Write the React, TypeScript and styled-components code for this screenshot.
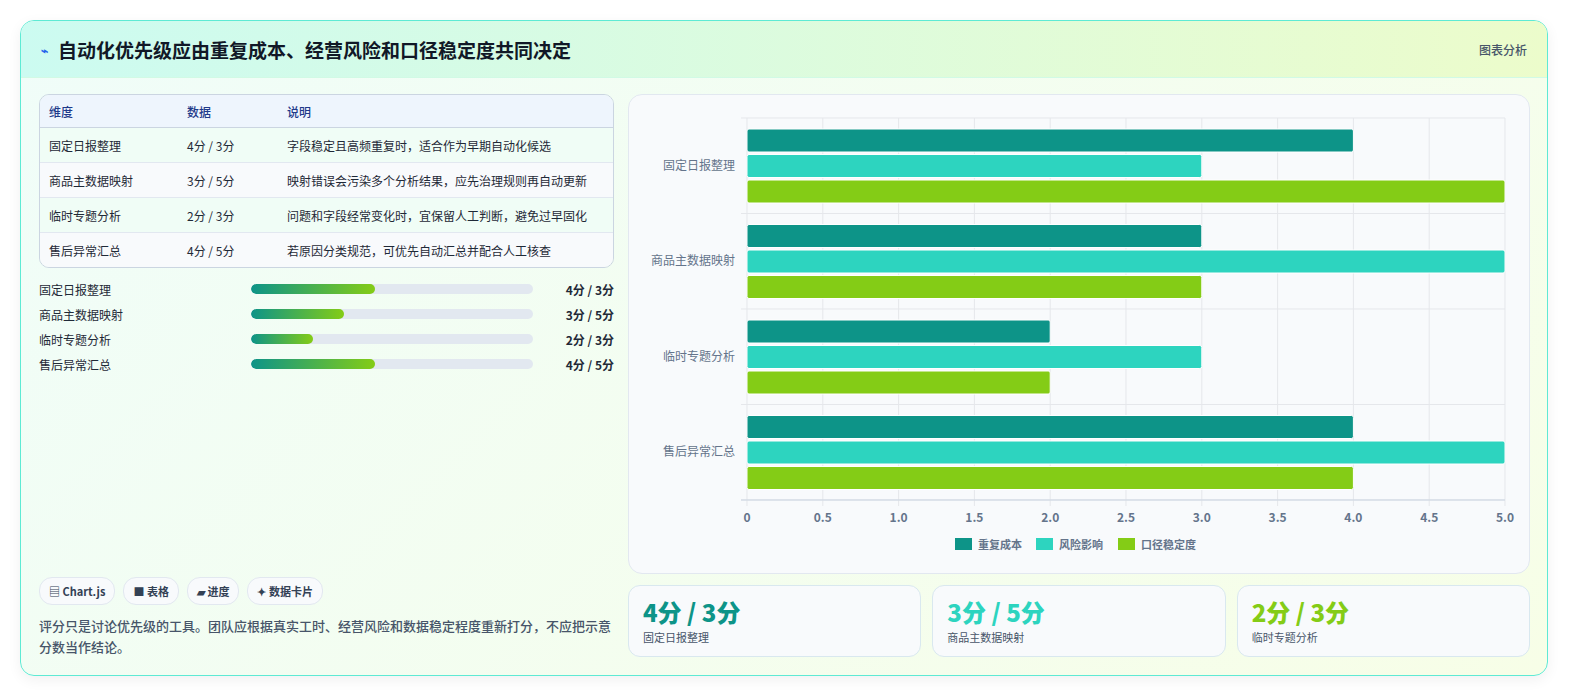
import styled, { createGlobalStyle } from "styled-components";

const Global = createGlobalStyle`
  html, body { margin: 0; background: #fff; }
  body { font-family: "Noto Sans CJK SC", "Noto Sans", sans-serif; color: #1f2937; }
`;

const Page = styled.div`
  padding: 20px 22px 22px 20px;
`;
const Card = styled.div`
  border: 1px solid #5eead4;
  border-radius: 14px;
  overflow: hidden;
  background: linear-gradient(135deg, #f0fdf9 0%, #f7fee7 100%);
  box-shadow: 0 4px 14px rgba(0,0,0,0.06);
`;
const Header = styled.div`
  height: 56px;
  display: flex;
  align-items: center;
  justify-content: space-between;
  padding: 0 20px 0 20px;
  background: linear-gradient(90deg, #ccfbf1 0%, #ecfccb 100%);
  border-bottom: 1px solid #d1fae5;
`;
const Title = styled.h1`
  margin: 0;
  font-size: 19px;
  font-weight: 700;
  color: #111827;
  display: flex;
  align-items: center;
  gap: 10px;
`;
const Bolt = styled.span`
  color: #2563eb;
  font-size: 12px;
`;
const HeaderTag = styled.span`
  font-size: 12px;
  color: #475569;
  font-weight: 500;
`;
const Body = styled.div`
  display: grid;
  grid-template-columns: 575px 1fr;
  gap: 14px;
  padding: 16px 18px 18px 18px;
`;
const Left = styled.div`
  display: flex;
  flex-direction: column;
`;
const Table = styled.table`
  width: 100%;
  border-collapse: separate;
  border-spacing: 0;
  border: 1px solid #cbd5e1;
  border-radius: 10px;
  overflow: hidden;
  font-size: 12px;
`;
const Th = styled.th`
  text-align: left;
  font-weight: 500;
  color: #1e3a8a;
  background: #eef5fd;
  height: 32px;
  padding: 0 9px;
  border-bottom: 1px solid #cbd5e1;
`;
const Td = styled.td<{ $alt?: boolean; $last?: boolean }>`
  height: 34px;
  padding: 0 9px;
  color: #1f2937;
  background: ${(p) => (p.$alt ? "#f8fafc" : "#f0fdf6")};
  border-bottom: ${(p) => (p.$last ? "none" : "1px solid #e2e8f0")};
`;
const Bars = styled.div`
  margin-top: 12px;
  display: flex;
  flex-direction: column;
  gap: 7px;
`;
const BarRow = styled.div`
  display: grid;
  grid-template-columns: 212px 291px 1fr;
  align-items: center;
  gap: 0;
  font-size: 12px;
  height: 18px;
`;
const Track = styled.div`
  height: 10px;
  border-radius: 5px;
  background: #e2e8f0;
  overflow: hidden;
  margin-right: 9px;
`;
const Fill = styled.div`
  height: 100%;
  border-radius: 5px;
  background: linear-gradient(90deg, #0d9488, #84cc16);
`;
const BarVal = styled.span`
  text-align: right;
  font-weight: 700;
  color: #1f2937;
`;
const Spacer = styled.div`
  flex: 1;
`;
const Chips = styled.div`
  display: flex;
  gap: 8px;
`;
const Chip = styled.span`
  height: 26px;
  padding: 0 9px;
  border: 1px solid #e2e8f0;
  border-radius: 13px;
  background: #f8fafc;
  font-size: 11px;
  font-weight: 600;
  color: #334155;
  display: flex;
  align-items: center;
  gap: 3px;
`;
const Note = styled.p`
  margin: 10px 0 0;
  font-size: 13px;
  line-height: 21px;
  color: #475569;
  font-weight: 500;
`;
const Right = styled.div`
  display: flex;
  flex-direction: column;
  gap: 11px;
`;
const ChartPanel = styled.div`
  height: 478px;
  border: 1px solid #e2e8f0;
  border-radius: 14px;
  background: #f8fafc;
  overflow: hidden;
`;
const Stats = styled.div`
  display: grid;
  grid-template-columns: repeat(3, 1fr);
  gap: 11px;
`;
const Stat = styled.div`
  height: 72px;
  border: 1px solid #d9e8ef;
  border-radius: 12px;
  background: #f8fafc;
  padding: 12px 14px 0;
  box-sizing: border-box;
`;
const StatVal = styled.div<{ $c: string }>`
  font-size: 24px;
  font-weight: 800;
  color: ${(p) => p.$c};
  line-height: 28px;
`;
const StatLabel = styled.div`
  font-size: 11px;
  color: #475569;
  margin-top: 3px;
`;

const rows = [
  { n: "固定日报整理", v: "4分 / 3分", d: "字段稳定且高频重复时，适合作为早期自动化候选", a: 4, b: 3, c: 5 },
  { n: "商品主数据映射", v: "3分 / 5分", d: "映射错误会污染多个分析结果，应先治理规则再自动更新", a: 3, b: 5, c: 3 },
  { n: "临时专题分析", v: "2分 / 3分", d: "问题和字段经常变化时，宜保留人工判断，避免过早固化", a: 2, b: 3, c: 2 },
  { n: "售后异常汇总", v: "4分 / 5分", d: "若原因分类规范，可优先自动汇总并配合人工核查", a: 4, b: 5, c: 4 },
];
const colors = ["#0d9488", "#2dd4bf", "#84cc16"];

function Chart() {
  const x0 = 118, x1 = 876, top = 23, bot = 405;
  const sx = (v: number) => x0 + ((x1 - x0) * v) / 5;
  const band = (bot - top) / 4;
  const ticks = [0, 0.5, 1, 1.5, 2, 2.5, 3, 3.5, 4, 4.5, 5];
  return (
    <svg width="900" height="478" style={{ display: "block" }}>
      {ticks.map((t) => (
        <line key={t} x1={sx(t)} x2={sx(t)} y1={top} y2={bot + 6} stroke="#e5e7eb" />
      ))}
      {[0, 1, 2, 3, 4].map((i) => (
        <line key={i} x1={x0 - 6} x2={x1} y1={top + band * i} y2={top + band * i} stroke="#e5e7eb" />
      ))}
      <line x1={x0 - 6} x2={x1} y1={bot} y2={bot} stroke="#cbd5e1" />
      {rows.map((r, i) => {
        const y = top + band * i + 11;
        return (
          <g key={r.n}>
            <text x={x0 - 12} y={top + band * i + band / 2 + 4} textAnchor="end" fontSize="12" fill="#64748b">{r.n}</text>
            {[r.a, r.b, r.c].map((v, k) => (
              <rect key={k} x={x0} y={y + k * 25.5} width={sx(v) - x0} height={23} rx={2} fill={colors[k]} stroke="#fff" strokeWidth={1} />
            ))}
          </g>
        );
      })}
      {ticks.map((t) => (
        <text key={t} x={sx(t)} y={bot + 22} textAnchor="middle" fontSize="12" fontWeight="600" fill="#64748b">
          {t === 0 ? "0" : t.toFixed(1)}
        </text>
      ))}
      {["重复成本", "风险影响", "口径稳定度"].map((l, k) => {
        const lx = [326, 407, 489][k];
        return (
          <g key={l}>
            <rect x={lx} y={443} width={17} height={12} fill={colors[k]} />
            <text x={lx + 23} y={454} fontSize="11" fontWeight="600" fill="#64748b">{l}</text>
          </g>
        );
      })}
    </svg>
  );
}

export default function App() {
  return (
    <Page>
      <Global />
      <Card>
        <Header>
          <Title><Bolt>⌁</Bolt>自动化优先级应由重复成本、经营风险和口径稳定度共同决定</Title>
          <HeaderTag>图表分析</HeaderTag>
        </Header>
        <Body>
          <Left>
            <Table>
              <thead>
                <tr><Th style={{ width: 120 }}>维度</Th><Th style={{ width: 82 }}>数据</Th><Th>说明</Th></tr>
              </thead>
              <tbody>
                {rows.map((r, i) => (
                  <tr key={r.n}>
                    <Td $alt={i % 2 === 1} $last={i === 3}>{r.n}</Td>
                    <Td $alt={i % 2 === 1} $last={i === 3}>{r.v}</Td>
                    <Td $alt={i % 2 === 1} $last={i === 3}>{r.d}</Td>
                  </tr>
                ))}
              </tbody>
            </Table>
            <Bars>
              {rows.map((r) => (
                <BarRow key={r.n}>
                  <span>{r.n}</span>
                  <Track><Fill style={{ width: `${(r.a / 5) * 100 * 0.55}%` }} /></Track>
                  <BarVal>{r.v}</BarVal>
                </BarRow>
              ))}
            </Bars>
            <Spacer />
            <Chips>
              <Chip>▤ Chart.js</Chip>
              <Chip>■ 表格</Chip>
              <Chip>▰ 进度</Chip>
              <Chip>✦ 数据卡片</Chip>
            </Chips>
            <Note>评分只是讨论优先级的工具。团队应根据真实工时、经营风险和数据稳定程度重新打分，不应把示意分数当作结论。</Note>
          </Left>
          <Right>
            <ChartPanel><Chart /></ChartPanel>
            <Stats>
              {rows.slice(0, 3).map((r, i) => (
                <Stat key={r.n}>
                  <StatVal $c={colors[i]}>{r.v}</StatVal>
                  <StatLabel>{r.n}</StatLabel>
                </Stat>
              ))}
            </Stats>
          </Right>
        </Body>
      </Card>
    </Page>
  );
}
